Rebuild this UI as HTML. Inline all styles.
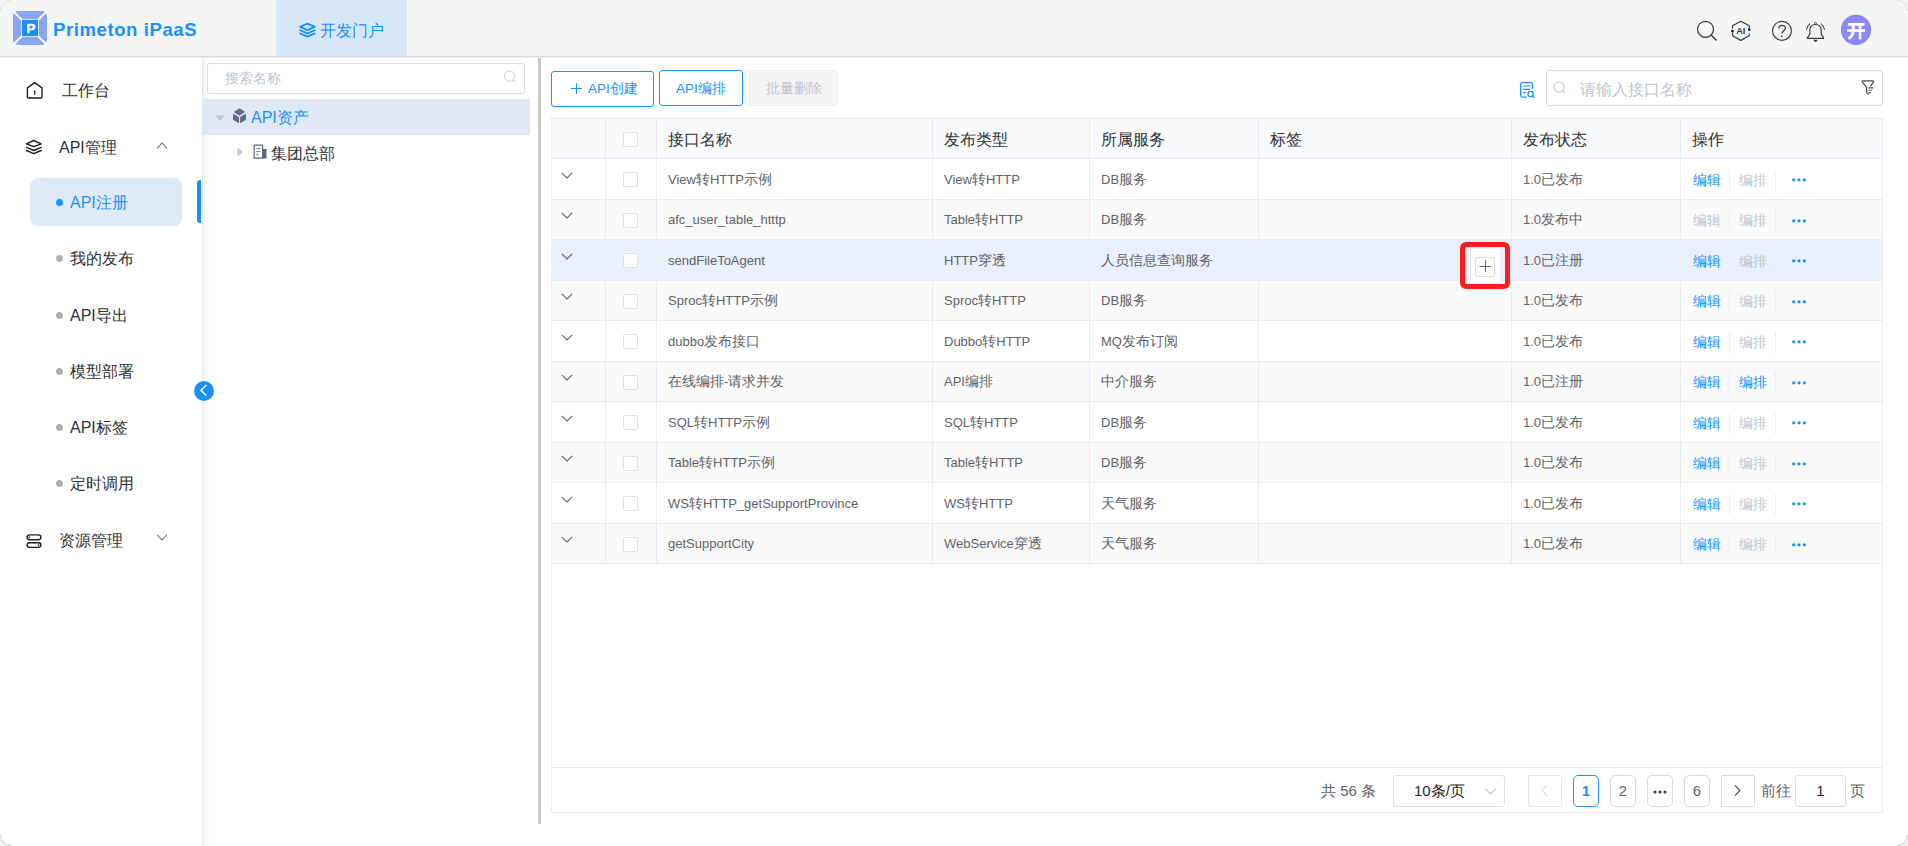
<!DOCTYPE html>
<html><head><meta charset="utf-8">
<style>
*{box-sizing:border-box;margin:0;padding:0}
html,body{width:1908px;height:846px;overflow:hidden;background:#fff}
body{font-family:"Liberation Sans",sans-serif;color:#303133;position:relative}
.a{position:absolute;white-space:nowrap}
#hdr{position:absolute;left:0;top:0;width:1908px;height:57px;background:#f4f5f7;border-bottom:1px solid #d9d9db}
#tab{position:absolute;left:276px;top:0;width:131px;height:56px;background:#d6e6f7}
#side{position:absolute;left:0;top:57px;width:203px;height:789px;background:#fff;border-right:1px solid #e6e6e6}
.mi{position:absolute;font-size:16px;color:#303133;line-height:20px}
.si{position:absolute;left:70px;font-size:16px;color:#303133;line-height:22px}
.dot{position:absolute;left:56px;width:7px;height:7px;border-radius:50%;background:#b1b1b1}
#tree{position:absolute;left:203px;top:57px;width:335px;height:789px;background:#fff}
#split{position:absolute;left:538px;top:58px;width:3px;height:766px;background:#c8c8c8}
.btn{position:absolute;top:71px;height:36px;border:1.5px solid #1890ff;border-radius:3px;color:#1890ff;font-size:13.5px;line-height:34px;text-align:center}
table{border-collapse:collapse}
#tbl{position:absolute;left:551px;top:118px;width:1332px;height:695px;border:1px solid #e8ebf3}
.hline{position:absolute;left:551px;width:1332px;height:1px;background:#e8ebf3}
.vline{position:absolute;width:1px;background:#e8ebf3}
.row{position:absolute;left:552px;width:1330px}
.cell{position:absolute;font-size:14px;color:#606266;line-height:16px}
.th{position:absolute;font-size:16px;color:#303133;line-height:20px}
.cb{position:absolute;left:623px;width:15px;height:15px;border:1px solid #dcdfe6;border-radius:2px;background:#fff}
.chev{position:absolute;left:561px;width:12px;height:7px}
.op{position:absolute;font-size:14px;line-height:16px}
.sep{position:absolute;width:1px;height:21px;background:#ebeef5}
.dots{position:absolute;left:1792px;width:14px;height:4px}
.pg{position:absolute;top:775px;height:32px;border:1px solid #d9d9d9;border-radius:5px;font-size:15px;line-height:30px;text-align:center;color:#606266;background:#fff}
</style></head><body>
<!-- HEADER -->
<div id="hdr"></div>
<div id="tab"></div>
<!-- logo -->
<svg class="a" style="left:13px;top:11px" width="34" height="34" viewBox="0 0 34 34">
  <rect x="0" y="0" width="34" height="34" rx="5" fill="#88a5f6"/>
  <path d="M0 0 L9 9 M34 0 L25 9 M0 34 L9 25 M34 34 L25 25" stroke="#f7f7f5" stroke-width="2"/>
  <rect x="8.2" y="8.2" width="17.6" height="17.6" fill="#f7f7f5"/>
  <rect x="9" y="9" width="16" height="16" fill="#1a8cff"/>
  <path d="M14.2 12.8 H19.3 Q22.3 12.8 22.3 16 Q22.3 19.3 19.3 19.3 H16.6 V21.8 L14.2 22.8 Z M16.6 14.9 V17.4 H18.6 Q19.8 17.4 19.8 16.15 Q19.8 14.9 18.6 14.9 Z" fill="#fff" fill-rule="evenodd"/>
</svg>
<div class="a" style="left:53px;top:18px;font-size:18.5px;font-weight:bold;color:#1890ff;line-height:24px;letter-spacing:0.6px">Primeton iPaaS</div>
<!-- tab icon + text -->
<svg class="a" style="left:294px;top:18px" width="26" height="26" viewBox="294 18 26 26">
  <path d="M300.2 26.9 L307.4 23.6 L314.7 26.9 L307.4 30.1 Z" fill="none" stroke="#1890ff" stroke-width="1.8" stroke-linejoin="round"/>
  <path d="M300.2 30.2 L307.4 33.4 L314.7 30.2" fill="none" stroke="#1890ff" stroke-width="1.8" stroke-linejoin="round" stroke-linecap="round"/>
  <path d="M300.2 33.5 L307.4 36.6 L314.7 33.5" fill="none" stroke="#1890ff" stroke-width="1.8" stroke-linejoin="round" stroke-linecap="round"/>
</svg>
<div class="a" style="left:320px;top:21px;font-size:16px;color:#1890ff;line-height:20px">开发门户</div>

<!-- right icons -->
<svg class="a" style="left:1690px;top:14px" width="200" height="34" viewBox="1690 14 200 34">
  <circle cx="1705.5" cy="29.3" r="8" fill="none" stroke="#3a3a3a" stroke-width="1.2"/>
  <path d="M1711.4 35.2 L1716.6 40.6" stroke="#3a3a3a" stroke-width="1.4"/>
  <path d="M1732.5 28.4 V25.8 L1740.9 21.3 L1749.3 25.8 V28.2 M1749.3 33.3 V35.8 L1740.9 40.4 L1732.5 35.8 V32.4" fill="none" stroke="#3a3a3a" stroke-width="1.2" stroke-linejoin="round"/>
  <circle cx="1732.4" cy="31.2" r="1.35" fill="#222"/>
  <circle cx="1749.3" cy="29.7" r="1.35" fill="#222"/>
  <text x="1740.8" y="33.6" font-family="Liberation Sans" font-weight="bold" font-size="9.3" fill="#3a3a3a" text-anchor="middle">AI</text>
  <circle cx="1782" cy="30.8" r="9.5" fill="none" stroke="#3a3a3a" stroke-width="1.15"/>
  <path d="M1778.9 28.5 C1778.8 24.4 1785.4 24.4 1785.4 27.9 C1785.4 30.4 1782.1 31 1781.9 33.6" fill="none" stroke="#3a3a3a" stroke-width="1.3"/>
  <circle cx="1781.9" cy="36.3" r="0.85" fill="#3a3a3a"/>
  <path d="M1807.4 38.3 Q1807.3 37.3 1808.5 36.2 Q1809.9 34.8 1809.9 32.8 V30 Q1809.9 24.5 1815.5 24.5 Q1821.1 24.5 1821.1 30 V32.8 Q1821.1 34.8 1822.5 36.2 Q1823.7 37.3 1823.6 38.3 Z" fill="none" stroke="#3a3a3a" stroke-width="1.2" stroke-linejoin="round"/>
  <circle cx="1815.5" cy="23.4" r="0.95" fill="none" stroke="#3a3a3a" stroke-width="0.9"/>
  <path d="M1813.5 39.7 H1817.5 Q1817.1 42 1815.5 42 Q1813.9 42 1813.5 39.7 Z" fill="#3a3a3a"/>
  <path d="M1806.4 30 Q1807 26.2 1809.9 23.6 M1824.6 30 Q1824 26.2 1821.1 23.6" fill="none" stroke="#3a3a3a" stroke-width="1.1"/>
  <circle cx="1856" cy="29.8" r="15.1" fill="#8b88fd"/>
  <path d="M1848 24.4 H1864.6 M1846.9 30.5 H1865 M1860.1 24.4 V39.3" fill="none" stroke="#fff" stroke-width="2.6"/><path d="M1853.3 24.4 V30.5 Q1853 36 1848.6 38.7" fill="none" stroke="#fff" stroke-width="3"/>
</svg>
<!-- SIDEBAR -->
<div id="side"></div>
<svg class="a" style="left:20px;top:76px" width="30" height="30" viewBox="20 76 30 30">
  <path d="M34.7 82.6 L42 87.9 V96.8 Q42 98 40.8 98 H28.6 Q27.4 98 27.4 96.8 V87.9 Z" fill="none" stroke="#1e1e1e" stroke-width="1.4" stroke-linejoin="round"/>
  <path d="M34.7 90.4 V94.8" stroke="#1e1e1e" stroke-width="1.3"/>
</svg>
<div class="mi" style="left:62px;top:81px">工作台</div>
<svg class="a" style="left:20px;top:132px" width="30" height="30" viewBox="20 132 30 30">
  <path d="M26.5 143.9 L33.7 140.5 L41.2 143.9 L33.7 146.7 Z" fill="none" stroke="#1e1e1e" stroke-width="1.4" stroke-linejoin="round"/>
  <path d="M26.5 147.3 L33.7 150.5 L41.2 147.3" fill="none" stroke="#1e1e1e" stroke-width="1.4" stroke-linejoin="round" stroke-linecap="round"/>
  <path d="M26.5 150.5 L33.7 153.6 L41.2 150.5" fill="none" stroke="#1e1e1e" stroke-width="1.4" stroke-linejoin="round" stroke-linecap="round"/>
</svg>
<div class="mi" style="left:59px;top:138px">API管理</div>
<svg class="a" style="left:156px;top:141px" width="12" height="9" viewBox="0 0 12 9"><path d="M1 7.5 L6 2 L11 7.5" fill="none" stroke="#666" stroke-width="1.1"/></svg>
<div class="a" style="left:30px;top:178px;width:152px;height:48px;border-radius:8px;background:#dfeaf7"></div>
<div class="a" style="left:197px;top:180px;width:4px;height:43px;border-radius:3px 0 0 3px;background:#1890ff"></div>
<div class="dot" style="top:199px;background:#1890ff"></div><div class="si" style="top:192px;color:#1890ff">API注册</div>
<div class="dot" style="top:255px"></div><div class="si" style="top:248px">我的发布</div>
<div class="dot" style="top:312px"></div><div class="si" style="top:305px">API导出</div>
<div class="dot" style="top:368px"></div><div class="si" style="top:361px">模型部署</div>
<div class="dot" style="top:424px"></div><div class="si" style="top:417px">API标签</div>
<div class="dot" style="top:480px"></div><div class="si" style="top:473px">定时调用</div>
<svg class="a" style="left:20px;top:526px" width="30" height="30" viewBox="20 526 30 30">
  <rect x="27.1" y="534.9" width="13.8" height="4.9" rx="2.45" fill="none" stroke="#1e1e1e" stroke-width="1.4"/>
  <rect x="27.1" y="542.8" width="13.8" height="4.6" rx="2.3" fill="none" stroke="#1e1e1e" stroke-width="1.4"/>
  <circle cx="29.4" cy="537.35" r="0.85" fill="#1e1e1e"/><circle cx="38.5" cy="545.1" r="0.9" fill="#1e1e1e"/>
</svg>
<div class="mi" style="left:59px;top:531px">资源管理</div>
<svg class="a" style="left:156px;top:533px" width="12" height="9" viewBox="0 0 12 9"><path d="M1 1.5 L6 7 L11 1.5" fill="none" stroke="#666" stroke-width="1.1"/></svg>

<!-- TREE -->
<div id="tree"></div>
<div class="a" style="left:203px;top:57px;width:7px;height:789px;background:linear-gradient(90deg,#f3f3f3,#f9f9f9 45%,#fff)"></div>
<div class="a" style="left:207px;top:63px;width:318px;height:31px;border:1px solid #dcdcdc;border-radius:2.5px;background:#fff"></div>
<div class="a" style="left:225px;top:71px;font-size:13.5px;color:#c0c4cc;line-height:16px">搜索名称</div>
<svg class="a" style="left:503px;top:70px" width="14" height="14" viewBox="0 0 14 14"><circle cx="6.7" cy="6.2" r="5.2" fill="none" stroke="#c4c7ce" stroke-width="1"/><path d="M10.3 9.8 L12.3 12" stroke="#c4c7ce" stroke-width="1"/></svg>
<div class="a" style="left:203px;top:99px;width:327px;height:36px;background:#dfe9f6"></div>
<svg class="a" style="left:215px;top:115px" width="10" height="7" viewBox="0 0 10 7"><path d="M0.5 0.5 H9.5 L5 6 Z" fill="#c0c4cc"/></svg>
<svg class="a" style="left:232px;top:108px" width="15" height="16" viewBox="0 0 15 16">
  <path d="M7.5 1 L12 3.8 L7.5 6.8 L3 3.8 Z" fill="#656a86" stroke="#656a86" stroke-width="1.4" stroke-linejoin="round"/>
  <path d="M1.5 6.4 L6.5 9.2 V14.6 L1.5 11.6 Z" fill="#656a86" stroke="#656a86" stroke-width="1" stroke-linejoin="round"/>
  <path d="M13.5 6.4 L8.5 9.2 V14.6 L13.5 11.6 Z" fill="#656a86" stroke="#656a86" stroke-width="1" stroke-linejoin="round"/>
</svg>
<div class="a" style="left:251px;top:109px;font-size:16px;color:#1890ff;line-height:18px">API资产</div>
<svg class="a" style="left:237px;top:147px" width="7" height="10" viewBox="0 0 7 10"><path d="M0.5 0.5 V9.5 L6 5 Z" fill="#c0c4cc"/></svg>
<svg class="a" style="left:253px;top:144px" width="14" height="15" viewBox="0 0 14 15">
  <path d="M1.2 1.2 H9.6 V14.2 H1.2 Z" fill="none" stroke="#5f6580" stroke-width="1.2" stroke-linejoin="round"/>
  <path d="M9.6 5 H13.5 V14.4 H9.6" fill="#5f6580"/>
  <path d="M3.3 4.5 H7.2 M3.3 7.5 H7.2 M3.3 10.4 H5.5" stroke="#7a8099" stroke-width="1.1"/>
</svg>
<div class="a" style="left:271px;top:145px;font-size:16px;color:#303133;line-height:18px">集团总部</div>
<!-- collapse btn -->
<div class="a" style="left:194px;top:381px;width:20px;height:20px;border-radius:50%;background:#1890ff"></div>
<svg class="a" style="left:194px;top:381px" width="20" height="20" viewBox="0 0 20 20"><path d="M12.3 4 L7 9.5 L12.3 14.5" fill="none" stroke="#fff" stroke-width="1.5"/></svg>

<div id="split"></div>
<div class="a" style="left:0;top:57px;width:1908px;height:1px;background:#eceef3"></div>

<!-- MAIN -->
<div class="btn" style="left:551px;width:103px;text-align:left;padding-left:36px">API创建</div>
<svg class="a" style="left:571px;top:83px" width="11" height="11" viewBox="0 0 11 11"><path d="M5.5 0 V11 M0 5.5 H11" stroke="#1890ff" stroke-width="1.1"/></svg>
<div class="btn" style="left:659px;top:70px;width:84px;height:36px;line-height:35px">API编排</div>
<div class="a" style="left:749px;top:70px;width:89px;height:36px;border-radius:3px;background:#f4f4f5;border:1px solid #ebeef5;color:#c0c4cc;font-size:13.5px;line-height:35px;text-align:center">批量删除</div>
<svg class="a" style="left:1514px;top:76px" width="26" height="26" viewBox="1514 76 26 26">
  <path d="M1526.2 97.1 H1522.2 Q1520.7 97.1 1520.7 95.6 V84.1 Q1520.7 82.6 1522.2 82.6 H1531 Q1532.5 82.6 1532.5 84.1 V88.6" fill="none" stroke="#1890ff" stroke-width="1.3" stroke-linecap="round"/>
  <path d="M1523.3 86 H1530.4" stroke="#7ab8ff" stroke-width="1.3" stroke-linecap="round"/>
  <path d="M1523.3 89.3 H1529.5 M1523.3 92.6 H1525.4" stroke="#1890ff" stroke-width="1.3" stroke-linecap="round"/>
  <circle cx="1530.6" cy="94" r="2.6" fill="none" stroke="#1890ff" stroke-width="1.3"/>
  <path d="M1532.5 96 L1534 97.6" stroke="#1890ff" stroke-width="1.3" stroke-linecap="round"/>
</svg>
<div class="a" style="left:1546px;top:70px;width:337px;height:36px;border:1px solid #dcdcdc;border-radius:3px;background:#fff"></div>
<svg class="a" style="left:1553px;top:81px" width="14" height="14" viewBox="0 0 14 14"><circle cx="6" cy="6" r="5" fill="none" stroke="#c0c4cc" stroke-width="1.1"/><path d="M9.6 9.6 L12 12" stroke="#c0c4cc" stroke-width="1.1"/></svg>
<div class="a" style="left:1580px;top:81px;font-size:16px;color:#c0c4cc;line-height:18px">请输入接口名称</div>
<svg class="a" style="left:1855px;top:74px" width="25" height="25" viewBox="1855 74 25 25">
  <path d="M1866.6 92.4 V87.4 L1862.6 82.4 Q1861.4 80.8 1863.2 80.8 H1872.4 Q1874.3 80.8 1873.2 82.4 L1870.6 86.4" fill="none" stroke="#4a4a4a" stroke-width="1.3" stroke-linejoin="round"/>
  <path d="M1866.6 92.4 L1868.6 94.6" stroke="#4a4a4a" stroke-width="1.3"/>
  <path d="M1868.6 87.9 H1873.3 M1868.6 90.3 H1872.2 M1868.6 92.6 H1871" stroke="#4a4a4a" stroke-width="1.1"/>
</svg>

<!-- TABLE -->
<div id="tbl"></div>
<div class="a" style="left:552px;top:119px;width:1330px;height:39px;background:#f9fafb"></div>
<div class="a" style="left:552px;top:159px;width:1330px;height:40px;background:#fff"></div>
<div class="a" style="left:552px;top:200px;width:1330px;height:39px;background:#fafafa"></div>
<div class="a" style="left:552px;top:240px;width:1330px;height:40px;background:#e9effc"></div>
<div class="a" style="left:552px;top:281px;width:1330px;height:39px;background:#fafafa"></div>
<div class="a" style="left:552px;top:321px;width:1330px;height:40px;background:#fff"></div>
<div class="a" style="left:552px;top:362px;width:1330px;height:39px;background:#fafafa"></div>
<div class="a" style="left:552px;top:402px;width:1330px;height:40px;background:#fff"></div>
<div class="a" style="left:552px;top:443px;width:1330px;height:39px;background:#fafafa"></div>
<div class="a" style="left:552px;top:483px;width:1330px;height:40px;background:#fff"></div>
<div class="a" style="left:552px;top:524px;width:1330px;height:39px;background:#fafafa"></div>
<div class="hline" style="top:158px"></div>
<div class="hline" style="top:199px"></div>
<div class="hline" style="top:239px"></div>
<div class="hline" style="top:280px"></div>
<div class="hline" style="top:320px"></div>
<div class="hline" style="top:361px"></div>
<div class="hline" style="top:401px"></div>
<div class="hline" style="top:442px"></div>
<div class="hline" style="top:482px"></div>
<div class="hline" style="top:523px"></div>
<div class="hline" style="top:563px"></div>
<div class="hline" style="top:767px"></div>
<div class="vline" style="left:605px;top:118px;height:446px"></div>
<div class="vline" style="left:656px;top:118px;height:446px"></div>
<div class="vline" style="left:932px;top:118px;height:446px"></div>
<div class="vline" style="left:1089px;top:118px;height:446px"></div>
<div class="vline" style="left:1258px;top:118px;height:446px"></div>
<div class="vline" style="left:1511px;top:118px;height:446px"></div>
<div class="vline" style="left:1680px;top:118px;height:446px"></div>
<div class="th" style="left:668px;top:130px">接口名称</div>
<div class="th" style="left:944px;top:130px">发布类型</div>
<div class="th" style="left:1101px;top:130px">所属服务</div>
<div class="th" style="left:1270px;top:130px">标签</div>
<div class="th" style="left:1523px;top:130px">发布状态</div>
<div class="th" style="left:1692px;top:130px">操作</div>
<div class="cb" style="top:132px"></div>
<svg class="chev" style="top:171.5px" viewBox="0 0 12 7"><path d="M0.8 0.8 L6 6 L11.2 0.8" fill="none" stroke="#606266" stroke-width="1.1"/></svg>
<div class="cb" style="top:172.0px"></div>
<div class="cell" style="left:668px;top:170.5px"><span style="font-size:13px">View</span>转<span style="font-size:13px">HTTP</span>示例</div>
<div class="cell" style="left:944px;top:170.5px"><span style="font-size:13px">View</span>转<span style="font-size:13px">HTTP</span></div>
<div class="cell" style="left:1101px;top:170.5px"><span style="font-size:13px">DB</span>服务</div>
<div class="cell" style="left:1523px;top:170.5px"><span style="font-size:13px">1.0</span>已发布</div>
<div class="op" style="left:1693px;top:171.5px;color:#1890ff">编辑</div>
<div class="sep" style="left:1729px;top:169.5px"></div>
<div class="op" style="left:1739px;top:171.5px;color:#c0c4cc">编排</div>
<div class="sep" style="left:1775px;top:169.5px"></div>
<svg class="dots" style="top:178.0px" viewBox="0 0 14 4"><circle cx="1.7" cy="1.8" r="1.6" fill="#1890ff"/><circle cx="7" cy="1.8" r="1.6" fill="#1890ff"/><circle cx="12.3" cy="1.8" r="1.6" fill="#1890ff"/></svg>
<svg class="chev" style="top:212.0px" viewBox="0 0 12 7"><path d="M0.8 0.8 L6 6 L11.2 0.8" fill="none" stroke="#606266" stroke-width="1.1"/></svg>
<div class="cb" style="top:212.5px"></div>
<div class="cell" style="left:668px;top:211.0px"><span style="font-size:13px">afc_user_table_htttp</span></div>
<div class="cell" style="left:944px;top:211.0px"><span style="font-size:13px">Table</span>转<span style="font-size:13px">HTTP</span></div>
<div class="cell" style="left:1101px;top:211.0px"><span style="font-size:13px">DB</span>服务</div>
<div class="cell" style="left:1523px;top:211.0px"><span style="font-size:13px">1.0</span>发布中</div>
<div class="op" style="left:1693px;top:212.0px;color:#c0c4cc">编辑</div>
<div class="sep" style="left:1729px;top:210.0px"></div>
<div class="op" style="left:1739px;top:212.0px;color:#c0c4cc">编排</div>
<div class="sep" style="left:1775px;top:210.0px"></div>
<svg class="dots" style="top:218.5px" viewBox="0 0 14 4"><circle cx="1.7" cy="1.8" r="1.6" fill="#1890ff"/><circle cx="7" cy="1.8" r="1.6" fill="#1890ff"/><circle cx="12.3" cy="1.8" r="1.6" fill="#1890ff"/></svg>
<svg class="chev" style="top:252.5px" viewBox="0 0 12 7"><path d="M0.8 0.8 L6 6 L11.2 0.8" fill="none" stroke="#606266" stroke-width="1.1"/></svg>
<div class="cb" style="top:253.0px"></div>
<div class="cell" style="left:668px;top:251.5px"><span style="font-size:13px">sendFileToAgent</span></div>
<div class="cell" style="left:944px;top:251.5px"><span style="font-size:13px">HTTP</span>穿透</div>
<div class="cell" style="left:1101px;top:251.5px">人员信息查询服务</div>
<div class="cell" style="left:1523px;top:251.5px"><span style="font-size:13px">1.0</span>已注册</div>
<div class="op" style="left:1693px;top:252.5px;color:#1890ff">编辑</div>
<div class="sep" style="left:1729px;top:250.5px"></div>
<div class="op" style="left:1739px;top:252.5px;color:#c0c4cc">编排</div>
<div class="sep" style="left:1775px;top:250.5px"></div>
<svg class="dots" style="top:259.0px" viewBox="0 0 14 4"><circle cx="1.7" cy="1.8" r="1.6" fill="#1890ff"/><circle cx="7" cy="1.8" r="1.6" fill="#1890ff"/><circle cx="12.3" cy="1.8" r="1.6" fill="#1890ff"/></svg>
<svg class="chev" style="top:293.0px" viewBox="0 0 12 7"><path d="M0.8 0.8 L6 6 L11.2 0.8" fill="none" stroke="#606266" stroke-width="1.1"/></svg>
<div class="cb" style="top:293.5px"></div>
<div class="cell" style="left:668px;top:292.0px"><span style="font-size:13px">Sproc</span>转<span style="font-size:13px">HTTP</span>示例</div>
<div class="cell" style="left:944px;top:292.0px"><span style="font-size:13px">Sproc</span>转<span style="font-size:13px">HTTP</span></div>
<div class="cell" style="left:1101px;top:292.0px"><span style="font-size:13px">DB</span>服务</div>
<div class="cell" style="left:1523px;top:292.0px"><span style="font-size:13px">1.0</span>已发布</div>
<div class="op" style="left:1693px;top:293.0px;color:#1890ff">编辑</div>
<div class="sep" style="left:1729px;top:291.0px"></div>
<div class="op" style="left:1739px;top:293.0px;color:#c0c4cc">编排</div>
<div class="sep" style="left:1775px;top:291.0px"></div>
<svg class="dots" style="top:299.5px" viewBox="0 0 14 4"><circle cx="1.7" cy="1.8" r="1.6" fill="#1890ff"/><circle cx="7" cy="1.8" r="1.6" fill="#1890ff"/><circle cx="12.3" cy="1.8" r="1.6" fill="#1890ff"/></svg>
<svg class="chev" style="top:333.5px" viewBox="0 0 12 7"><path d="M0.8 0.8 L6 6 L11.2 0.8" fill="none" stroke="#606266" stroke-width="1.1"/></svg>
<div class="cb" style="top:334.0px"></div>
<div class="cell" style="left:668px;top:332.5px"><span style="font-size:13px">dubbo</span>发布接口</div>
<div class="cell" style="left:944px;top:332.5px"><span style="font-size:13px">Dubbo</span>转<span style="font-size:13px">HTTP</span></div>
<div class="cell" style="left:1101px;top:332.5px"><span style="font-size:13px">MQ</span>发布订阅</div>
<div class="cell" style="left:1523px;top:332.5px"><span style="font-size:13px">1.0</span>已发布</div>
<div class="op" style="left:1693px;top:333.5px;color:#1890ff">编辑</div>
<div class="sep" style="left:1729px;top:331.5px"></div>
<div class="op" style="left:1739px;top:333.5px;color:#c0c4cc">编排</div>
<div class="sep" style="left:1775px;top:331.5px"></div>
<svg class="dots" style="top:340.0px" viewBox="0 0 14 4"><circle cx="1.7" cy="1.8" r="1.6" fill="#1890ff"/><circle cx="7" cy="1.8" r="1.6" fill="#1890ff"/><circle cx="12.3" cy="1.8" r="1.6" fill="#1890ff"/></svg>
<svg class="chev" style="top:374.0px" viewBox="0 0 12 7"><path d="M0.8 0.8 L6 6 L11.2 0.8" fill="none" stroke="#606266" stroke-width="1.1"/></svg>
<div class="cb" style="top:374.5px"></div>
<div class="cell" style="left:668px;top:373.0px">在线编排<span style="font-size:13px">-</span>请求并发</div>
<div class="cell" style="left:944px;top:373.0px"><span style="font-size:13px">API</span>编排</div>
<div class="cell" style="left:1101px;top:373.0px">中介服务</div>
<div class="cell" style="left:1523px;top:373.0px"><span style="font-size:13px">1.0</span>已注册</div>
<div class="op" style="left:1693px;top:374.0px;color:#1890ff">编辑</div>
<div class="sep" style="left:1729px;top:372.0px"></div>
<div class="op" style="left:1739px;top:374.0px;color:#1890ff">编排</div>
<div class="sep" style="left:1775px;top:372.0px"></div>
<svg class="dots" style="top:380.5px" viewBox="0 0 14 4"><circle cx="1.7" cy="1.8" r="1.6" fill="#1890ff"/><circle cx="7" cy="1.8" r="1.6" fill="#1890ff"/><circle cx="12.3" cy="1.8" r="1.6" fill="#1890ff"/></svg>
<svg class="chev" style="top:414.5px" viewBox="0 0 12 7"><path d="M0.8 0.8 L6 6 L11.2 0.8" fill="none" stroke="#606266" stroke-width="1.1"/></svg>
<div class="cb" style="top:415.0px"></div>
<div class="cell" style="left:668px;top:413.5px"><span style="font-size:13px">SQL</span>转<span style="font-size:13px">HTTP</span>示例</div>
<div class="cell" style="left:944px;top:413.5px"><span style="font-size:13px">SQL</span>转<span style="font-size:13px">HTTP</span></div>
<div class="cell" style="left:1101px;top:413.5px"><span style="font-size:13px">DB</span>服务</div>
<div class="cell" style="left:1523px;top:413.5px"><span style="font-size:13px">1.0</span>已发布</div>
<div class="op" style="left:1693px;top:414.5px;color:#1890ff">编辑</div>
<div class="sep" style="left:1729px;top:412.5px"></div>
<div class="op" style="left:1739px;top:414.5px;color:#c0c4cc">编排</div>
<div class="sep" style="left:1775px;top:412.5px"></div>
<svg class="dots" style="top:421.0px" viewBox="0 0 14 4"><circle cx="1.7" cy="1.8" r="1.6" fill="#1890ff"/><circle cx="7" cy="1.8" r="1.6" fill="#1890ff"/><circle cx="12.3" cy="1.8" r="1.6" fill="#1890ff"/></svg>
<svg class="chev" style="top:455.0px" viewBox="0 0 12 7"><path d="M0.8 0.8 L6 6 L11.2 0.8" fill="none" stroke="#606266" stroke-width="1.1"/></svg>
<div class="cb" style="top:455.5px"></div>
<div class="cell" style="left:668px;top:454.0px"><span style="font-size:13px">Table</span>转<span style="font-size:13px">HTTP</span>示例</div>
<div class="cell" style="left:944px;top:454.0px"><span style="font-size:13px">Table</span>转<span style="font-size:13px">HTTP</span></div>
<div class="cell" style="left:1101px;top:454.0px"><span style="font-size:13px">DB</span>服务</div>
<div class="cell" style="left:1523px;top:454.0px"><span style="font-size:13px">1.0</span>已发布</div>
<div class="op" style="left:1693px;top:455.0px;color:#1890ff">编辑</div>
<div class="sep" style="left:1729px;top:453.0px"></div>
<div class="op" style="left:1739px;top:455.0px;color:#c0c4cc">编排</div>
<div class="sep" style="left:1775px;top:453.0px"></div>
<svg class="dots" style="top:461.5px" viewBox="0 0 14 4"><circle cx="1.7" cy="1.8" r="1.6" fill="#1890ff"/><circle cx="7" cy="1.8" r="1.6" fill="#1890ff"/><circle cx="12.3" cy="1.8" r="1.6" fill="#1890ff"/></svg>
<svg class="chev" style="top:495.5px" viewBox="0 0 12 7"><path d="M0.8 0.8 L6 6 L11.2 0.8" fill="none" stroke="#606266" stroke-width="1.1"/></svg>
<div class="cb" style="top:496.0px"></div>
<div class="cell" style="left:668px;top:494.5px"><span style="font-size:13px">WS</span>转<span style="font-size:13px">HTTP_getSupportProvince</span></div>
<div class="cell" style="left:944px;top:494.5px"><span style="font-size:13px">WS</span>转<span style="font-size:13px">HTTP</span></div>
<div class="cell" style="left:1101px;top:494.5px">天气服务</div>
<div class="cell" style="left:1523px;top:494.5px"><span style="font-size:13px">1.0</span>已发布</div>
<div class="op" style="left:1693px;top:495.5px;color:#1890ff">编辑</div>
<div class="sep" style="left:1729px;top:493.5px"></div>
<div class="op" style="left:1739px;top:495.5px;color:#c0c4cc">编排</div>
<div class="sep" style="left:1775px;top:493.5px"></div>
<svg class="dots" style="top:502.0px" viewBox="0 0 14 4"><circle cx="1.7" cy="1.8" r="1.6" fill="#1890ff"/><circle cx="7" cy="1.8" r="1.6" fill="#1890ff"/><circle cx="12.3" cy="1.8" r="1.6" fill="#1890ff"/></svg>
<svg class="chev" style="top:536.0px" viewBox="0 0 12 7"><path d="M0.8 0.8 L6 6 L11.2 0.8" fill="none" stroke="#606266" stroke-width="1.1"/></svg>
<div class="cb" style="top:536.5px"></div>
<div class="cell" style="left:668px;top:535.0px"><span style="font-size:13px">getSupportCity</span></div>
<div class="cell" style="left:944px;top:535.0px"><span style="font-size:13px">WebService</span>穿透</div>
<div class="cell" style="left:1101px;top:535.0px">天气服务</div>
<div class="cell" style="left:1523px;top:535.0px"><span style="font-size:13px">1.0</span>已发布</div>
<div class="op" style="left:1693px;top:536.0px;color:#1890ff">编辑</div>
<div class="sep" style="left:1729px;top:534.0px"></div>
<div class="op" style="left:1739px;top:536.0px;color:#c0c4cc">编排</div>
<div class="sep" style="left:1775px;top:534.0px"></div>
<svg class="dots" style="top:542.5px" viewBox="0 0 14 4"><circle cx="1.7" cy="1.8" r="1.6" fill="#1890ff"/><circle cx="7" cy="1.8" r="1.6" fill="#1890ff"/><circle cx="12.3" cy="1.8" r="1.6" fill="#1890ff"/></svg>
<div class="a" style="left:1466px;top:248px;width:5px;height:33px;background:#e9effc"></div>
<div class="a" style="left:1471px;top:248px;width:29px;height:33px;background:#fff"></div>
<div class="a" style="left:1475px;top:257px;width:20px;height:20px;border:1px solid #dcdfe6;border-radius:2px;background:#fff"></div>
<svg class="a" style="left:1479px;top:260px" width="12" height="12" viewBox="0 0 12 12"><path d="M6.5 0 V12 M0.5 6.5 H12" stroke="#666" stroke-width="1"/></svg>
<div class="a" style="left:1460px;top:242px;width:50px;height:47px;border:5px solid #ff1c1c;border-radius:6px"></div>
<div class="a" style="left:1321px;top:782px;font-size:15px;color:#606266;line-height:18px">共 56 条</div>
<div class="a" style="left:1393px;top:775px;width:112px;height:32px;border:1px solid #dcdfe6;border-radius:3px;background:#fff"></div>
<div class="a" style="left:1414px;top:782px;font-size:15px;color:#1f1f1f;line-height:18px">10条/页</div>
<svg class="a" style="left:1485px;top:788px" width="11" height="7" viewBox="0 0 11 7"><path d="M0.5 0.8 L5.5 6 L10.5 0.8" fill="none" stroke="#c0c4cc" stroke-width="1.1"/></svg>
<div class="pg" style="left:1528px;width:34px;border-color:#e4e7ed;border-radius:2px"></div>
<svg class="a" style="left:1541px;top:785px" width="7" height="11" viewBox="0 0 7 11"><path d="M6 0.5 L1 5.5 L6 10.5" fill="none" stroke="#dcdfe6" stroke-width="1.2"/></svg>
<div class="pg" style="left:1573px;width:26px;border:1.5px solid #1890ff;color:#1890ff;font-weight:bold;line-height:29px">1</div>
<div class="pg" style="left:1610px;width:26px">2</div>
<div class="pg" style="left:1647px;width:26px"></div>
<svg class="a" style="left:1653px;top:790px" width="14" height="4" viewBox="0 0 14 4"><circle cx="2" cy="2" r="1.6" fill="#444"/><circle cx="7" cy="2" r="1.6" fill="#444"/><circle cx="12" cy="2" r="1.6" fill="#444"/></svg>
<div class="pg" style="left:1684px;width:26px">6</div>
<div class="pg" style="left:1721px;width:34px;border-radius:2px"></div>
<svg class="a" style="left:1734px;top:785px" width="7" height="11" viewBox="0 0 7 11"><path d="M1 0.5 L6 5.5 L1 10.5" fill="none" stroke="#555" stroke-width="1.2"/></svg>
<div class="a" style="left:1761px;top:782px;font-size:15px;color:#606266;line-height:18px">前往</div>
<div class="a" style="left:1795px;top:775px;width:51px;height:32px;border:1px solid #dcdfe6;border-radius:3px;background:#fff;font-size:15px;line-height:30px;text-align:center;color:#1f1f1f">1</div>
<div class="a" style="left:1850px;top:782px;font-size:15px;color:#606266;line-height:18px">页</div>
<!-- window corners -->
<svg class="a" style="left:0;top:0" width="14" height="14" viewBox="0 0 14 14"><path d="M0 0 H11 A11 11 0 0 0 0 11 Z" fill="#f2f3f5"/><path d="M11 0.5 A10.5 10.5 0 0 0 0.5 11" fill="none" stroke="#d8d8d8" stroke-width="1.2" opacity="0.55"/></svg>
<svg class="a" style="left:1894px;top:0" width="14" height="14" viewBox="0 0 14 14"><path d="M14 0 H3 A11 11 0 0 1 14 11 Z" fill="#f2f3f5"/><path d="M3 0.5 A10.5 10.5 0 0 1 13.5 11" fill="none" stroke="#d8d8d8" stroke-width="1.2" opacity="0.55"/></svg>
<svg class="a" style="left:0;top:832px" width="14" height="14" viewBox="0 0 14 14"><path d="M0 14 H11 A11 11 0 0 1 0 3 Z" fill="#f4f4f4"/><path d="M11 13.5 A10.5 10.5 0 0 1 0.5 3" fill="none" stroke="#d4d4d4" stroke-width="1.4" opacity="0.8"/></svg>
<svg class="a" style="left:1894px;top:832px" width="14" height="14" viewBox="0 0 14 14"><path d="M14 14 H3 A11 11 0 0 0 14 3 Z" fill="#f4f4f4"/><path d="M3 13.5 A10.5 10.5 0 0 0 13.5 3" fill="none" stroke="#d4d4d4" stroke-width="1.4" opacity="0.8"/></svg>
</body></html>
